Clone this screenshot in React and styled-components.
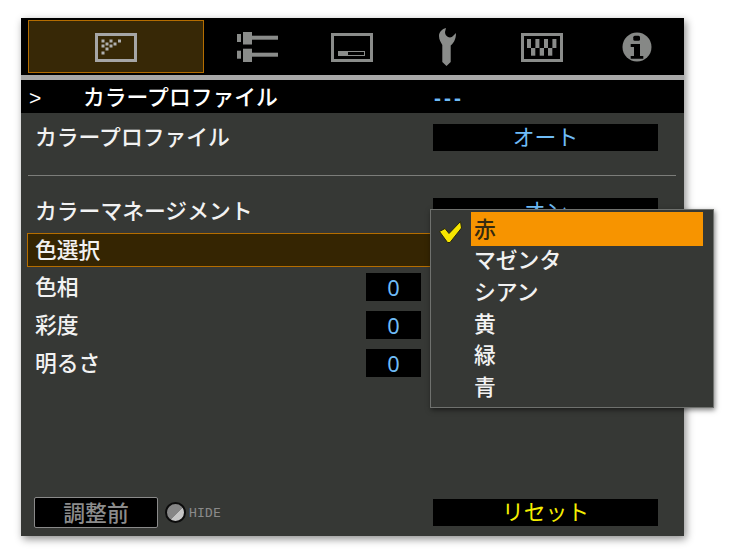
import styled, { createGlobalStyle } from "styled-components";

const GlobalStyle = createGlobalStyle`
  html, body {
    margin: 0;
    padding: 0;
    background: #fff;
  }

  body {
    min-height: 550px;
  }

  #root {
    padding: 18px 0 14px 21px;
    box-sizing: border-box;
  }
`;

const Panel = styled.div`
  position: relative;
  display: flex;
  flex-direction: column;
  box-sizing: border-box;
  width: 663px;
  height: 518px;
  background: #363835;
  box-shadow: 2px 3px 8px rgba(0, 0, 0, 0.45);
  font-family: "Noto Sans CJK JP", "Noto Sans", sans-serif;
  font-size: 21.8px;
  color: #f2f2f2;
`;

const TabBar = styled.div`
  display: grid;
  grid-template-columns: 182px repeat(5, 1fr);
  height: 62px;
  padding: 2px 0 0 7px;
  box-sizing: border-box;
  background: #000;
  border-bottom: 5px solid #a8a8a8;
`;

const Tab = styled.div`
  display: flex;
  align-items: center;
  justify-content: center;
  height: 53px;
  box-sizing: border-box;
  border: ${(p) => (p.$active ? "1px solid #b56d00" : "none")};
  background: ${(p) => (p.$active ? "#372806" : "transparent")};
  width: ${(p) => (p.$active ? "176px" : "auto")};
  padding-top: ${(p) => (p.$active ? "2px" : "1px")};
`;

const Header = styled.div`
  display: grid;
  grid-template-columns: 54px 351px 1fr;
  align-items: center;
  height: 33px;
  padding-left: 8px;
  background: #000;
  color: #fff;
`;

const Caret = styled.span`
  font-family: "Liberation Sans", sans-serif;
  font-size: 21px;
`;

const HeaderTitle = styled.span`
  padding-bottom: 4px;
  font-weight: 500;
`;

const Dashes = styled.span`
  font-family: "Liberation Sans", sans-serif;
  font-size: 21px;
  font-weight: 700;
  letter-spacing: 3px;
  color: #6fbcf7;
`;

const Body = styled.div`
  display: flex;
  flex-direction: column;
  flex: 1;
  padding-top: 11px;
`;

const Row = styled.div`
  display: flex;
  align-items: center;
  justify-content: space-between;
  padding: 0 26px 0 14px;
  height: 27px;
`;

const Label = styled.span`
  padding-bottom: 3px;
  line-height: 1;
  font-weight: 500;
`;

const ValueBox = styled.div`
  display: flex;
  align-items: center;
  justify-content: center;
  box-sizing: border-box;
  width: 225px;
  height: 27px;
  padding-bottom: 4px;
  background: #000;
  color: ${(p) => (p.$yellow ? "#f5ee00" : "#6fbcf7")};
`;

const Separator = styled.hr`
  width: 648px;
  height: 1px;
  margin: 24px 0 22px 7px;
  border: 0;
  background: #7c7d7a;
`;

const SelectedRow = styled.div`
  display: flex;
  align-items: center;
  box-sizing: border-box;
  height: 34px;
  margin: 8px 8px 6px 6px;
  padding: 0 0 3px 7px;
  background: #352502;
  border: 1px solid #b56d00;
  font-weight: 500;
`;

const NumberRows = styled.div`
  display: flex;
  flex-direction: column;
  gap: 10px;
`;

const NumberRow = styled.div`
  display: grid;
  grid-template-columns: 331px 55px;
  align-items: center;
  height: 28px;
  padding-left: 14px;
`;

const NumberBox = styled.div`
  display: flex;
  align-items: center;
  justify-content: center;
  height: 28px;
  background: #000;
  color: #6fbcf7;
  font-family: "Noto Sans", sans-serif;
`;

const Footer = styled.div`
  display: flex;
  align-items: center;
  margin-top: auto;
  padding: 0 26px 8px 13px;
`;

const BeforeButton = styled.div`
  display: flex;
  align-items: center;
  justify-content: center;
  box-sizing: border-box;
  width: 124px;
  height: 31px;
  padding-bottom: 3px;
  background: #000;
  border: 1px solid #8a8a8a;
  border-radius: 2px;
  color: #8c8c8c;
  font-weight: 500;
`;

const HideDot = styled.div`
  width: 21px;
  height: 21px;
  box-sizing: border-box;
  margin-left: 7px;
  border: 2px solid #0c0c0c;
  border-radius: 50%;
  background: linear-gradient(135deg, #bcbcbc 0 14%, #868686 14% 58%, #c6c6c6 58% 100%);
`;

const HideText = styled.span`
  margin-left: 3px;
  font-family: "DejaVu Sans Mono", monospace;
  font-size: 13px;
  letter-spacing: 0.2px;
  color: #8a8a8a;
`;

const ResetBox = styled(ValueBox)`
  margin-left: auto;
`;

const Popup = styled.div`
  position: absolute;
  top: 191px;
  left: 409px;
  display: grid;
  grid-template-columns: 40px 232px;
  box-sizing: border-box;
  width: 284px;
  height: 199px;
  padding-top: 2px;
  background: #363835;
  border: 1px solid #6f716e;
  box-shadow: 1px 2px 5px rgba(0, 0, 0, 0.5);
`;

const CheckCell = styled.div`
  padding: 7px 0 0 7px;
`;

const ItemList = styled.div`
  display: flex;
  flex-direction: column;
`;

const Item = styled.div`
  display: flex;
  align-items: center;
  box-sizing: border-box;
  height: ${(p) => (p.$active ? "34px" : "31.7px")};
  margin-bottom: ${(p) => (p.$active ? "-1px" : "0")};
  padding: 0 0 4px 3px;
  background: ${(p) => (p.$active ? "#f79400" : "transparent")};
  color: ${(p) => (p.$active ? "#352a10" : "#f2f2f2")};
  font-weight: 500;
`;

const ICON_GREY = "#8a8c8a";

function PictureIcon() {
  const dots = [
    [8, 8],
    [8, 13],
    [8, 20],
    [12, 11],
    [12, 16],
    [16, 8],
    [16, 13],
    [20, 11],
    [24.5, 8],
  ];
  return (
    <svg width="42" height="29" viewBox="0 0 42 29">
      <rect x="1.5" y="1.5" width="39" height="26" fill="none" stroke="#a6a6a6" strokeWidth="3" />
      {dots.map(([x, y]) => (
        <rect key={`${x}-${y}`} x={x - 1.5} y={y - 1.5} width="3" height="3" fill="#b0b0b0" />
      ))}
    </svg>
  );
}

function SlidersIcon() {
  return (
    <svg width="43" height="32" viewBox="0 0 43 32" fill={ICON_GREY}>
      <rect x="1" y="3" width="4" height="8" />
      <rect x="7" y="1" width="9" height="12.5" />
      <rect x="16" y="4.7" width="26" height="4" />
      <rect x="1" y="19.7" width="4" height="8" />
      <rect x="7" y="17.7" width="9" height="13.3" />
      <rect x="16" y="21.7" width="26" height="4" />
    </svg>
  );
}

function ScreenIcon() {
  return (
    <svg width="42" height="29" viewBox="0 0 42 29">
      <rect x="1.5" y="1.5" width="39" height="26" fill="none" stroke={ICON_GREY} strokeWidth="3" />
      <rect x="7.5" y="18.5" width="26" height="4" fill="none" stroke={ICON_GREY} strokeWidth="1" />
      <rect x="7" y="18" width="10" height="5" fill={ICON_GREY} />
    </svg>
  );
}

function WrenchIcon() {
  return (
    <svg width="18" height="38" viewBox="0 0 18 38" fill={ICON_GREY}>
      <path d="M8 0C4 1 1 4 1 8c0 4 2 6.5 3.300 9v17l4.200 4 4.200-4V17.500C15 15.500 18 12 18 5l-2.500 2.500C14 9.500 12 10 10 9 8 8 7 6 7 4Z" />
    </svg>
  );
}

function KeysIcon() {
  return (
    <svg width="42" height="29" viewBox="0 0 42 29" fill={ICON_GREY}>
      <rect x="1.5" y="1.5" width="39" height="26" fill="none" stroke={ICON_GREY} strokeWidth="3" />
      {[6, 14.4, 23, 31.4].map((x) => (
        <rect key={x} x={x} y="6" width="4" height="9" />
      ))}
      {[10, 18.7, 27].map((x) => (
        <rect key={x} x={x} y="15" width="4.3" height="7.7" />
      ))}
    </svg>
  );
}

function InfoIcon() {
  return (
    <svg width="30" height="30" viewBox="0 0 30 30">
      <circle cx="15" cy="15" r="14.5" fill="#868886" />
      <rect x="11.3" y="3.7" width="6.7" height="5" rx="1.5" fill="#000" />
      <path d="M8.7 12H18v12h3.3v2.7H8.7V24H12v-9H8.7Z" fill="#000" />
    </svg>
  );
}

function CheckIcon() {
  return (
    <svg width="25" height="24" viewBox="0 0 25 24">
      <path
        d="M1.500 11.500 7 8.500l4 5L22.500 1.500 23.500 8 12 22.500h-2.500Z"
        fill="#f7e600"
        stroke="#25250f"
        strokeWidth="1"
      />
    </svg>
  );
}

const COLOURS = ["赤", "マゼンタ", "シアン", "黄", "緑", "青"];
const ADJUSTMENTS = ["色相", "彩度", "明るさ"];

export default function App() {
  return (
    <>
      <GlobalStyle />
      <Panel>
        <TabBar>
          <Tab $active>
            <PictureIcon />
          </Tab>
          <Tab>
            <SlidersIcon />
          </Tab>
          <Tab>
            <ScreenIcon />
          </Tab>
          <Tab>
            <WrenchIcon />
          </Tab>
          <Tab>
            <KeysIcon />
          </Tab>
          <Tab>
            <InfoIcon />
          </Tab>
        </TabBar>
        <Header>
          <Caret>&gt;</Caret>
          <HeaderTitle>カラープロファイル</HeaderTitle>
          <Dashes>---</Dashes>
        </Header>
        <Body>
          <Row>
            <Label>カラープロファイル</Label>
            <ValueBox>オート</ValueBox>
          </Row>
          <Separator />
          <Row>
            <Label>カラーマネージメント</Label>
            <ValueBox>オン</ValueBox>
          </Row>
          <SelectedRow>色選択</SelectedRow>
          <NumberRows>
            {ADJUSTMENTS.map((name) => (
              <NumberRow key={name}>
                <Label>{name}</Label>
                <NumberBox>0</NumberBox>
              </NumberRow>
            ))}
          </NumberRows>
          <Footer>
            <BeforeButton>調整前</BeforeButton>
            <HideDot />
            <HideText>HIDE</HideText>
            <ResetBox $yellow>リセット</ResetBox>
          </Footer>
        </Body>
        <Popup>
          <CheckCell>
            <CheckIcon />
          </CheckCell>
          <ItemList>
            {COLOURS.map((name, i) => (
              <Item key={name} $active={i === 0}>
                {name}
              </Item>
            ))}
          </ItemList>
        </Popup>
      </Panel>
    </>
  );
}
